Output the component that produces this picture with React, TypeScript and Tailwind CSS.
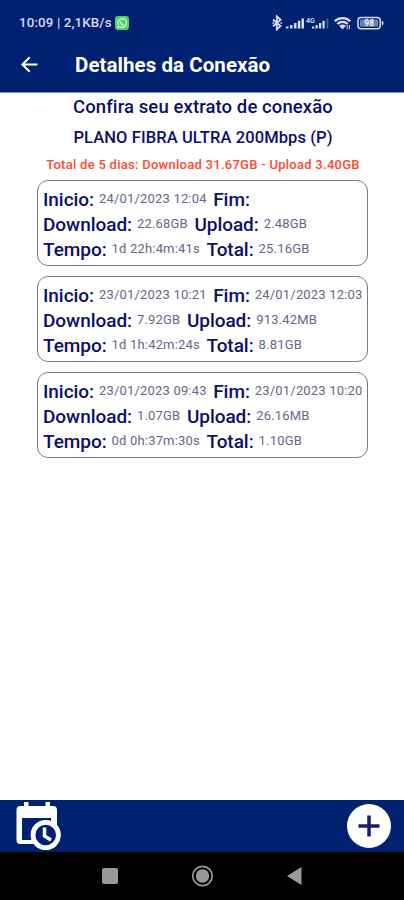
import type React from "react"

type Session = {
  inicio: string
  fim: string
  download: string
  upload: string
  tempo: string
  total: string
}

const sessions: Session[] = [
  {
    inicio: "24/01/2023 12:04",
    fim: "",
    download: "22.68GB",
    upload: "2.48GB",
    tempo: "1d 22h:4m:41s",
    total: "25.16GB",
  },
  {
    inicio: "23/01/2023 10:21",
    fim: "24/01/2023 12:03",
    download: "7.92GB",
    upload: "913.42MB",
    tempo: "1d 1h:42m:24s",
    total: "8.81GB",
  },
  {
    inicio: "23/01/2023 09:43",
    fim: "23/01/2023 10:20",
    download: "1.07GB",
    upload: "26.16MB",
    tempo: "0d 0h:37m:30s",
    total: "1.10GB",
  },
]

function StatusBar() {
  return (
    <div className="flex h-[46px] items-center justify-between pl-[19px] pr-[19px] text-[#d5dcf0]">
      <div className="flex items-center gap-[3px]">
        <span className="text-[13.3px] font-medium tracking-[0.14px] whitespace-nowrap">10:09 | 2,1KB/s</span>
        <svg width="14" height="14" viewBox="0 0 13 13">
          <rect width="13" height="13" rx="3" fill="#4bd964" />
          <path d="M2.600 10.600l.6-2.200a4 4 0 1 1 1.500 1.500z" fill="none" stroke="#d9fbe0" strokeWidth="1" />
          <path d="M4.900 4.600c0 2 1.600 3.500 3.500 3.600" fill="none" stroke="#d9fbe0" strokeWidth="1.300" />
        </svg>
      </div>

      <svg width="113" height="16" viewBox="0 0 113 16" fill="currentColor">
        {/* bluetooth */}
        <path d="M1 4.500l7.500 6.500-3.700 3.500V1.200l3.700 3.500L1 11.200" fill="none" stroke="currentColor" strokeWidth="1.800" />
        <circle cx="1.200" cy="7.900" r="0.900" />
        <circle cx="9.300" cy="7.900" r="0.900" />
        {/* sim 1 */}
        <path d="M14 11.500h2.500v2H14zM18 10h2.500v3.500H18zM22 8h2.500v5.500H22zM25.800 5.800h2.500v7.700h-2.500zM29.500 3.400H32v10.100h-2.500z" />
        {/* sim 2 */}
        <text x="34" y="7.500" fontSize="7" fontWeight="600" fontFamily="Roboto, sans-serif">4G</text>
        <path d="M40 11.500h2.200v2H40zM43.500 10h2.200v3.500h-2.200zM47 8h2.200v5.500H47zM50.500 5.800h2.200v7.700h-2.200z" />
        <path d="M54.500 3.400h1.800v10.100h-1.800z" opacity="0.350" />
        {/* wifi */}
        <g fill="none" stroke="currentColor" strokeWidth="2.300">
          <path d="M62.700 6.200c4.300-4.200 11.300-4.200 15.600 0" />
          <path d="M65.300 9c2.900-2.800 7.500-2.800 10.400 0" />
        </g>
        <path d="M67.100 10.800c2-1.700 4.800-1.700 6.800 0l-3.400 3.600z" />
        <path d="M75.200 10v4.200M77.300 10v4.200" stroke="currentColor" strokeWidth="1" />
        {/* battery */}
        <rect x="86" y="2.600" width="22.200" height="11.200" rx="3" fill="none" stroke="currentColor" strokeWidth="1.500" />
        <rect x="88" y="4.600" width="18.200" height="7.200" rx="1.200" opacity="0.500" />
        <path d="M109.800 5.500a2.800 2.800 0 0 1 0 5.200z" />
        <text x="92.300" y="11.200" fontSize="8.500" fontWeight="700" fill="#f2f5ff" fontFamily="Roboto, sans-serif">98</text>
      </svg>
    </div>
  )
}

function Header() {
  return (
    <header className="h-[93px] border-b border-[#7f8bb5] bg-[#002070]">
      <StatusBar />
      <div className="flex h-[38px] items-center pl-[21px]">
        <svg className="-mt-[2px]" width="17" height="17" viewBox="0 0 17 17" fill="none" stroke="white" strokeWidth="2">
          <path d="M16.500 8.500H2M8.700 1.200L1.400 8.500l7.300 7.300" />
        </svg>
        <h1 className="ml-[37px] text-[20.5px] font-bold tracking-[0.06px] whitespace-nowrap text-white">Detalhes da Conexão</h1>
      </div>
    </header>
  )
}

function Label({ children }: { children: React.ReactNode }) {
  return <span className="text-[19px] font-medium tracking-[-0.05px] text-[#0b0f68]">{children}</span>
}

function Value({ children }: { children: React.ReactNode }) {
  return <span className="mr-[6.5px] ml-[5px] pb-[2px] text-[13px] tracking-[0.18px] text-[#666786]">{children}</span>
}

function SessionCard({ session }: { session: Session }) {
  return (
    <div className="h-[86px] w-[331px] rounded-[11px] border border-[#7b7b88] pt-[6.5px] pl-[5px] whitespace-nowrap">
      <div className="flex h-[25px] items-center">
        <Label>Inicio:</Label>
        <Value>{session.inicio}</Value>
        <Label>Fim:</Label>
        <Value>{session.fim}</Value>
      </div>
      <div className="flex h-[25px] items-center">
        <Label>Download:</Label>
        <Value>{session.download}</Value>
        <Label>Upload:</Label>
        <Value>{session.upload}</Value>
      </div>
      <div className="flex h-[25px] items-center">
        <Label>Tempo:</Label>
        <Value>{session.tempo}</Value>
        <Label>Total:</Label>
        <Value>{session.total}</Value>
      </div>
    </div>
  )
}

function BottomBar() {
  return (
    <div className="flex h-[52px] items-start justify-between bg-[#002070] pr-[13px] pl-[16px]">
      <svg className="mt-[2px]" width="46" height="49" viewBox="0 0 46 49">
        <path
          d="M8 0h4.500v4h17V0H34v4h3a4 4 0 0 1 4 4v34H4.500a4 4 0 0 1-4-4V8a4 4 0 0 1 4-4H8z"
          fill="white"
        />
        <path d="M6 16h29v22H6z" fill="#002070" />
        <path d="M32 39h14v10H32z" fill="#002070" />
        <circle cx="29.700" cy="33" r="12.700" fill="#002070" stroke="white" strokeWidth="4.800" />
        <path d="M28.500 25.500V34l6.500 4" fill="none" stroke="white" strokeWidth="3.500" />
      </svg>
      <button className="mt-[4px] flex size-[44px] items-center justify-center rounded-full bg-white">
        <svg width="22" height="22" viewBox="0 0 22 22" stroke="#1a1c6c" strokeWidth="3.500">
          <path d="M11 0.500v21M0.500 11h21" />
        </svg>
      </button>
    </div>
  )
}

function NavBar() {
  return (
    <div className="flex h-[48px] items-center justify-center bg-black">
      <svg width="202" height="24" viewBox="0 0 202 24" fill="#9a9a9a">
        <rect x="1" y="4" width="16" height="16" rx="2" />
        <circle cx="101.500" cy="12" r="9.700" fill="none" stroke="#9a9a9a" strokeWidth="1.700" />
        <circle cx="101.500" cy="12" r="6.700" />
        <path d="M186 12l14.500-9v18z" />
      </svg>
    </div>
  )
}

export default function App() {
  return (
    <div className="flex h-[900px] w-[404px] flex-col overflow-hidden bg-white font-[Roboto,sans-serif]">
      <Header />
      <main className="flex flex-1 flex-col items-center pl-[2px] text-[#0b0f68]">
        <h2 className="h-[28px] text-[18.5px] leading-[28px] font-medium tracking-[0.1px] whitespace-nowrap">
          Confira seu extrato de conexão
        </h2>
        <h3 className="mt-[3px] h-[28px] text-[16.5px] leading-[28px] font-medium tracking-[0.1px] whitespace-nowrap">
          PLANO FIBRA ULTRA 200Mbps (P)
        </h3>
        <p className="mt-[3px] h-[20px] text-[13px] leading-[20px] font-medium tracking-[0.27px] whitespace-nowrap text-[#ff4a2c]">
          Total de 5 dias: Download 31.67GB - Upload 3.40GB
        </p>
        <div className="mt-[5px] mr-px flex flex-col gap-[10px]">
          {sessions.map((session) => (
            <SessionCard key={session.inicio} session={session} />
          ))}
        </div>
      </main>
      <BottomBar />
      <NavBar />
    </div>
  )
}
